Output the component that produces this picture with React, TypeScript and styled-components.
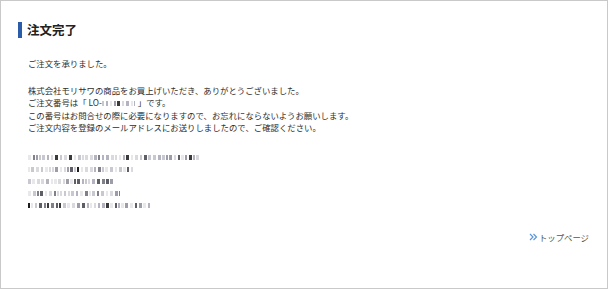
import React, {useMemo} from "react"
import styled, {createGlobalStyle} from "styled-components";

const GlobalStyle = createGlobalStyle`
  html, body {
    margin: 0;
    padding: 0;
    background: #ffffff;
  }
  body {
    font-family: "Noto Sans CJK JP", "Noto Sans", sans-serif;
    color: #333333;
  }
`

const StyledFrame = styled.div`
  box-sizing: border-box;
  width: 608px;
  height: 289px;
  border: 1px solid #c9c9c9;
  padding: 21px 17px 0 17px;
  display: flex;
  flex-direction: column;
`

const StyledHeading = styled.div`
  display: flex;
  align-items: center;
  gap: 5px;
  height: 16px;
`

const StyledBar = styled.span`
  width: 4px;
  height: 16px;
  background: #2a5caa;
`

const StyledTitle = styled.h1`
  margin: 0;
  font-size: 12.5px;
  line-height: 16px;
  font-weight: 700;
  color: #222222;
`

const StyledBody = styled.div`
  padding-left: 10px;
  margin-top: 19px;
  font-size: 8.4px;
  line-height: 12.5px;
  color: #2e2e2e;
`

const StyledParagraph = styled.p<{ $gap?: number }>`
  margin: ${p => p.$gap ?? 0}px 0 0 0;
`

const StyledMosaicBlock = styled.div`
  margin-top: 21px;
  display: flex;
  flex-direction: column;
  gap: 7px;
`

const StyledMosaicLine = styled.span<{ $inline?: boolean }>`
  display: ${p => p.$inline ? "inline-flex" : "flex"};
  height: 5px;
  vertical-align: middle;
`

const StyledSeg = styled.span<{ $w: number, $c: string, $gap: number }>`
  width: ${p => p.$w}px;
  margin-right: ${p => p.$gap}px;
  height: 100%;
  background: ${p => p.$c};
  flex: none;
`

const StyledFooter = styled.div`
  margin-top: auto;
  margin-bottom: 45px;
  display: flex;
  justify-content: flex-end;
  padding-right: 1px;
`

const StyledLink = styled.a`
  display: flex;
  align-items: center;
  gap: 1px;
  font-size: 8.4px;
  line-height: 12px;
  color: #555555;
  text-decoration: none;
`

// deterministic pseudo random so the mosaic stays the same every render
const makeRandom = (seed: number) => () => {
    seed = (seed * 9301 + 49297) % 233280
    return seed / 233280
}

const shades = ["#1c1c1c", "#3a3a3a", "#5e5e66", "#80808a", "#9d9daa", "#b4b4c0", "#c8c8d0", "#dadade", "#e8e8ea"]

const Mosaic: React.FC<{ width: number, seed: number, inline?: boolean }> = ({width, seed, inline}) => {
    const segs = useMemo(() => {
        const rnd = makeRandom(seed)
        const out: { w: number, c: string, g: number }[] = []
        let used = 0
        while (used < width) {
            const w = Math.min(width - used, 2 + Math.floor(rnd() * 2))
            const c = shades[Math.floor(Math.pow(rnd(), 0.6) * shades.length)]
            const g = rnd() < 0.6 ? 2 : 1
            out.push({w, c, g})
            used += w + g
        }
        return out
    }, [width, seed])

    return (
        <StyledMosaicLine $inline={inline}>
            {segs.map((s, i) => <StyledSeg key={i} $w={s.w} $c={s.c} $gap={s.g}/>)}
        </StyledMosaicLine>
    )
}

const Chevrons: React.FC = () => (
    <svg width="9" height="8" viewBox="0 0 9 8">
        <path d="M1 1 L4 4 L1 7 M4.5 1 L7.5 4 L4.5 7" fill="none" stroke="#5b95db" strokeWidth="1.2"/>
    </svg>
)

const App: React.FC = () => {
    return (
        <>
            <GlobalStyle/>
            <StyledFrame>
                <StyledHeading>
                    <StyledBar/>
                    <StyledTitle>注文完了</StyledTitle>
                </StyledHeading>
                <StyledBody>
                    <StyledParagraph>ご注文を承りました。</StyledParagraph>
                    <StyledParagraph $gap={14}>
                        株式会社モリサワの商品をお買上げいただき、ありがとうございました。<br/>
                        ご注文番号は「 LO-<Mosaic width={33} seed={7} inline/> 」です。<br/>
                        この番号はお問合せの際に必要になりますので、お忘れにならないようお願いします。<br/>
                        ご注文内容を登録のメールアドレスにお送りしましたので、ご確認ください。
                    </StyledParagraph>
                    <StyledMosaicBlock>
                        <Mosaic width={171} seed={11}/>
                        <Mosaic width={106} seed={23}/>
                        <Mosaic width={86} seed={37}/>
                        <Mosaic width={92} seed={41}/>
                        <Mosaic width={122} seed={53}/>
                    </StyledMosaicBlock>
                </StyledBody>
                <StyledFooter>
                    <StyledLink href="#">
                        <Chevrons/>
                        トップページ
                    </StyledLink>
                </StyledFooter>
            </StyledFrame>
        </>
    )
}

export default App
